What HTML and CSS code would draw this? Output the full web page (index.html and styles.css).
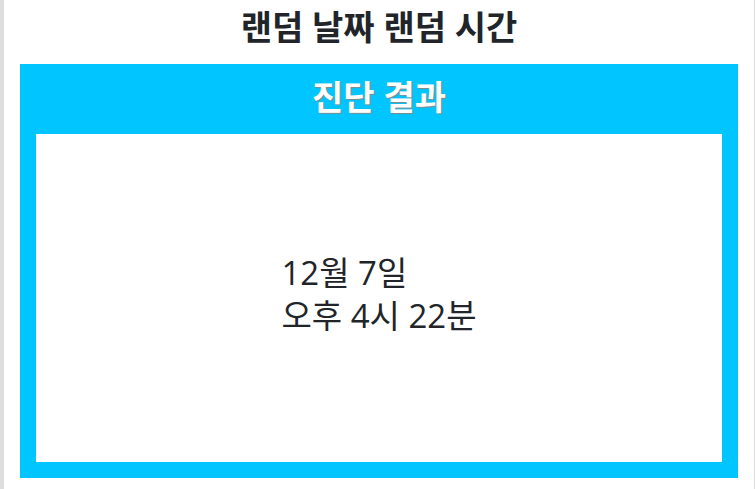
FILE: index.html
```html
<!DOCTYPE html>
<html lang="ko">
<head>
<meta charset="utf-8">
<meta name="viewport" content="width=device-width, initial-scale=1">
<title>랜덤 날짜 랜덤 시간</title>
<link rel="stylesheet" href="styles.css">
</head>
<body>
<main class="page">
  <h1 class="title">랜덤 날짜 랜덤 시간</h1>
  <section class="card">
    <h2 class="card-title">진단 결과</h2>
    <div class="result">
      <p class="result-text">12월 7일<br>오후 4시 22분</p>
    </div>
  </section>
</main>
</body>
</html>
```

FILE: styles.css
```css
* { box-sizing: border-box; }
body {
  margin: 0;
  background: #fff;
  color: #212529;
  font-family: "Open Sans", "Noto Sans CJK KR", sans-serif;
  font-size: 33px;
}
.page {
  display: flex;
  flex-direction: column;
  min-height: 100vh;
  padding: 8px 16px 11px;
  border-left: 4px solid #dedede;
  border-right: 1px solid #dedede;
}
.title, .card-title {
  margin: 0;
  font-size: 34px;
  line-height: 38px;
  font-weight: 700;
  text-align: center;
}
.title { margin-bottom: 18px; }
.card {
  display: flex;
  flex: 1;
  flex-direction: column;
  padding: 14px 16px 16px;
  background: #00c5ff;
}
.card-title {
  margin-bottom: 18px;
  color: #fff;
  text-shadow: 1px 1px 1px #888;
}
.result {
  display: flex;
  flex: 1;
  align-items: center;
  justify-content: center;
  padding-bottom: 8px;
  background: #fff;
}
.result-text { margin: 0; line-height: 43px; }
```
